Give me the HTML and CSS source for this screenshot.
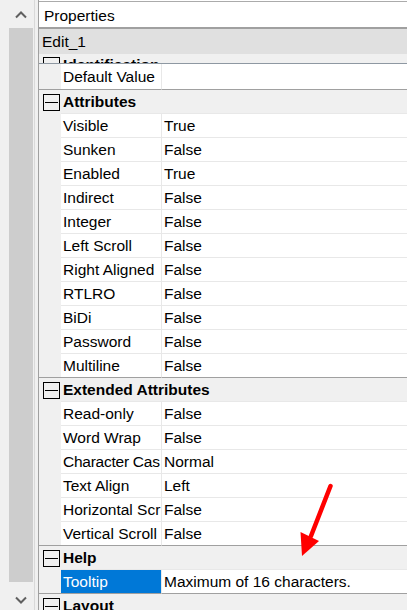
FILE: index.html
```html
<!DOCTYPE html>
<html>
<head>
<meta charset="utf-8">
<title>Properties</title>
<link rel="stylesheet" href="styles.css">
</head>
<body>
<div class="window">
  <div class="vscroll">
    <div class="sb-btn up">
      <svg width="12" height="8" viewBox="0 0 12 8"><polyline points="1,6.5 6,1.5 11,6.5" fill="none" stroke="#606060" stroke-width="2"/></svg>
    </div>
    <div class="sb-track"><div class="sb-thumb"></div></div>
    <div class="sb-btn down">
      <svg width="12" height="8" viewBox="0 0 12 8"><polyline points="1,1.5 6,6.5 11,1.5" fill="none" stroke="#606060" stroke-width="2"/></svg>
    </div>
  </div>
  <div class="gutter"></div>
  <div class="panel">
    <div class="panel-title">Properties</div>
    <div class="object-bar">Edit_1</div>
    <div class="peek">
      <div class="row group">
        <div class="indent"><span class="toggle"><span class="minus"></span></span></div>
        <div class="label">Identification</div>
      </div>
    </div>
    <div class="grid">
      <div class="row prop first end"><div class="indent"></div><div class="name">Default Value</div><div class="value"></div></div>

      <div class="row group"><div class="indent"><span class="toggle"><span class="minus"></span></span></div><div class="label">Attributes</div></div>
      <div class="row prop"><div class="indent"></div><div class="name">Visible</div><div class="value">True</div></div>
      <div class="row prop"><div class="indent"></div><div class="name">Sunken</div><div class="value">False</div></div>
      <div class="row prop"><div class="indent"></div><div class="name">Enabled</div><div class="value">True</div></div>
      <div class="row prop"><div class="indent"></div><div class="name">Indirect</div><div class="value">False</div></div>
      <div class="row prop"><div class="indent"></div><div class="name">Integer</div><div class="value">False</div></div>
      <div class="row prop"><div class="indent"></div><div class="name">Left Scroll</div><div class="value">False</div></div>
      <div class="row prop"><div class="indent"></div><div class="name">Right Aligned</div><div class="value">False</div></div>
      <div class="row prop"><div class="indent"></div><div class="name">RTLRO</div><div class="value">False</div></div>
      <div class="row prop"><div class="indent"></div><div class="name">BiDi</div><div class="value">False</div></div>
      <div class="row prop"><div class="indent"></div><div class="name">Password</div><div class="value">False</div></div>
      <div class="row prop end"><div class="indent"></div><div class="name">Multiline</div><div class="value">False</div></div>

      <div class="row group"><div class="indent"><span class="toggle"><span class="minus"></span></span></div><div class="label">Extended Attributes</div></div>
      <div class="row prop"><div class="indent"></div><div class="name">Read-only</div><div class="value">False</div></div>
      <div class="row prop"><div class="indent"></div><div class="name">Word Wrap</div><div class="value">False</div></div>
      <div class="row prop"><div class="indent"></div><div class="name tight">Character Cas</div><div class="value">Normal</div></div>
      <div class="row prop"><div class="indent"></div><div class="name">Text Align</div><div class="value">Left</div></div>
      <div class="row prop"><div class="indent"></div><div class="name">Horizontal Scr</div><div class="value">False</div></div>
      <div class="row prop end"><div class="indent"></div><div class="name">Vertical Scroll</div><div class="value">False</div></div>

      <div class="row group"><div class="indent"><span class="toggle"><span class="minus"></span></span></div><div class="label">Help</div></div>
      <div class="row prop end"><div class="indent"></div><div class="name sel">Tooltip</div><div class="value">Maximum of 16 characters.</div></div>

      <div class="row group"><div class="indent"><span class="toggle"><span class="minus"></span></span></div><div class="label">Layout</div></div>
    </div>
  </div>
  <svg class="annotation" width="407" height="610" viewBox="0 0 407 610">
    <line x1="330.5" y1="486" x2="311" y2="536" stroke="#ff0000" stroke-width="4.5" stroke-linecap="round"/>
    <polygon points="302,556 300.5,532 319,541" fill="#ff0000"/>
  </svg>
</div>
</body>
</html>
```

FILE: styles.css
```css
html, body {
  margin: 0;
  padding: 0;
}

body {
  width: 407px;
  height: 610px;
  overflow: hidden;
  background: #ffffff;
  color: #000000;
  font-family: "Liberation Sans", Arial, sans-serif;
  font-size: 15.5px;
}

.window {
  position: relative;
  display: flex;
  height: 610px;
}

/* left scrollbar */
.vscroll {
  flex: none;
  width: 34px;
  background: #f0f0f0;
  display: flex;
  flex-direction: column;
}

.sb-btn {
  flex: none;
  height: 28px;
  width: 24px;
  margin-left: 9px;
  box-sizing: border-box;
  display: flex;
  justify-content: center;
  align-items: flex-start;
}

.sb-btn.up {
  padding-top: 11px;
}

.sb-btn.down {
  padding-top: 14px;
}

.sb-track {
  flex: 1;
  padding-left: 9px;
}

.sb-thumb {
  width: 24px;
  height: 100%;
  background: #cdcdcd;
}

.gutter {
  flex: none;
  width: 4px;
  box-sizing: border-box;
  border-left: 1px solid #d9d9d9;
  background: #f0f0f0;
}

/* property panel */
.panel {
  flex: 1;
  min-width: 0;
  border-left: 1px solid #a0a0a0;
  display: flex;
  flex-direction: column;
  overflow: hidden;
}

.panel-title {
  flex: none;
  margin-top: 1px;
  height: 25px;
  line-height: 27px;
  padding-left: 5px;
  border-top: 1px solid #ababab;
  border-bottom: 2px solid #a0a0a0;
  background: #ffffff;
}

.object-bar {
  flex: none;
  height: 25px;
  line-height: 25px;
  padding-left: 3px;
  background: #e0e0e0;
}

.peek {
  flex: none;
  height: 9px;
  overflow: hidden;
  background: #f0f0f0;
  border-bottom: 1px solid #8e98a2;
}

.peek .row.group {
  margin-top: -1px;
}

.grid {
  flex: none;
}

.row {
  display: flex;
  height: 24px;
}

.row.first {
  height: 26px;
}

.indent {
  flex: none;
  width: 22px;
  box-sizing: border-box;
  background: #f0f0f0;
  border-bottom: 1px solid #f0f0f0;
}

.name {
  flex: none;
  width: 101px;
  box-sizing: border-box;
  padding-left: 2px;
  background: #ffffff;
  border-right: 1px solid #e8e8e8;
  border-bottom: 1px solid #e8e8e8;
  white-space: nowrap;
  overflow: hidden;
  display: flex;
  align-items: center;
}

.name.tight {
  letter-spacing: -0.25px;
}

.value {
  flex: 1;
  min-width: 0;
  box-sizing: border-box;
  padding-left: 2px;
  background: #ffffff;
  border-bottom: 1px solid #e8e8e8;
  white-space: nowrap;
  overflow: hidden;
  display: flex;
  align-items: center;
}

.name.sel {
  background: #0078d7;
  color: #ffffff;
}

.row.end .indent,
.row.end .name,
.row.end .value {
  border-bottom-color: #a0a0a0;
}

/* group header rows */
.row.group .indent {
  padding: 4px 0 0 4px;
}

.toggle {
  width: 17px;
  height: 17px;
  box-sizing: border-box;
  border: 1px solid #000000;
  display: flex;
  align-items: center;
  justify-content: center;
}

.minus {
  width: 13px;
  height: 1px;
  background: #000000;
}

.label {
  flex: 1;
  box-sizing: border-box;
  padding-left: 2px;
  line-height: 23px;
  font-weight: bold;
  background: #f0f0f0;
  border-bottom: 1px solid #e8e8e8;
  white-space: nowrap;
}

/* annotation overlay */
.annotation {
  position: absolute;
  left: 0;
  top: 0;
  pointer-events: none;
}
```
